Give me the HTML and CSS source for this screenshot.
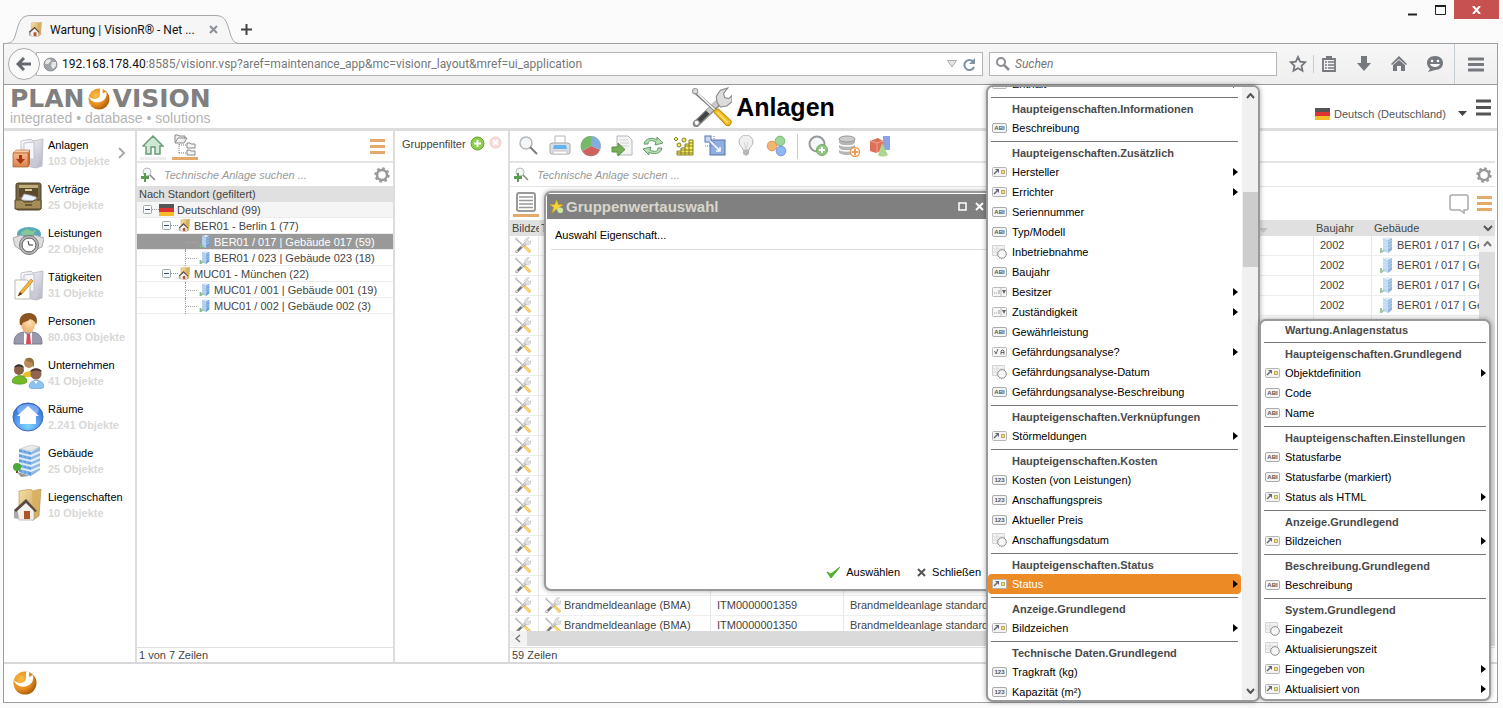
FILE: index.html
```html
<!DOCTYPE html>
<html lang="de">
<head>
<meta charset="utf-8">
<title>Wartung | VisionR® - Net ...</title>
<link rel="stylesheet" href="styles.css">
</head>
<body>
<svg class="defs" aria-hidden="true">
  <defs>
    <linearGradient id="gSteel" x1="0" y1="0" x2="1" y2="1"><stop offset="0" stop-color="#fff"/><stop offset="1" stop-color="#b4b4c4"/></linearGradient>
    <linearGradient id="gTan" x1="0" y1="0" x2="1" y2="1"><stop offset="0" stop-color="#f5dfa4"/><stop offset="1" stop-color="#c39a4d"/></linearGradient>
    <radialGradient id="gBlue" cx=".5" cy=".8" r=".8"><stop offset="0" stop-color="#7fd6ff"/><stop offset="1" stop-color="#2a62d8"/></radialGradient>
    <radialGradient id="gOrange" cx=".35" cy=".35" r=".75"><stop offset="0" stop-color="#fbc04a"/><stop offset=".6" stop-color="#e58a1c"/><stop offset="1" stop-color="#9a5208"/></radialGradient>
    <linearGradient id="gBox" x1="0" y1="0" x2="0" y2="1"><stop offset="0" stop-color="#f6b98c"/><stop offset="1" stop-color="#d9834c"/></linearGradient>
    <radialGradient id="gSkin" cx=".6" cy=".4" r=".7"><stop offset="0" stop-color="#ffe0b4"/><stop offset="1" stop-color="#e8a860"/></radialGradient>
  </defs>
  <symbol id="ball" viewBox="0 0 24 24"><circle cx="12" cy="12" r="11.5" fill="url(#gOrange)"/><path d="M1 9c2 3 7 4 10 2 2-1 2-3 2-6V1l3 0v5l4-2c1 5-1 9-6 11-6 2-12-1-13-6z" fill="#fff"/></symbol>
  <symbol id="tools" viewBox="0 0 38 38"><path d="M4 35l22-21" stroke="#888" stroke-width="6.500" stroke-linecap="round"/><path d="M5 34l10-10" stroke="#444" stroke-width="4" stroke-linecap="round"/><path d="M15 24l12-12" stroke="#c9c9c9" stroke-width="5"/><path d="M24 15l-1-6 4-6 7-2-4 5 1 4 4 1 3-3 0 6-5 4-6 1z" fill="#dcdcdc" stroke="#888"/><circle cx="4.500" cy="34" r="2.500" fill="#fff" stroke="#888"/><path d="M2 4l20 18" stroke="#777" stroke-width="3"/><path d="M2 3l20 19" stroke="#f4f4f4" stroke-width="1.500"/><circle cx="3" cy="4" r="2.500" fill="#ddd" stroke="#999"/><path d="M21 22l4-1 12 11c1 3-2 6-5 4l-11-12z" fill="#f5bd1f" stroke="#c48a10"/><path d="M24 24l10 10" stroke="#ffe477" stroke-width="1.500"/></symbol>
  <symbol id="folder" viewBox="0 0 32 32"><path d="M9 4l10-2 2 2 10-2-1 27-6 2-15-3z" fill="url(#gSteel)" stroke="#b8b8c4" stroke-width=".8"/><path d="M12 6l10-1v18l-10 4z" fill="#f7f7fb" stroke="#b0b0bc" stroke-width=".7"/><path d="M9 9l3 12 15 1-3 8-15-2z" fill="#c9c9d8"/></symbol>
  <symbol id="anlagen" viewBox="0 0 32 32"><use href="#folder"/><path d="M1 16l3-3h14l-2 3z" fill="#f9cda6" stroke="#b2683a" stroke-width=".6"/><path d="M1 16h15v14H1z" fill="url(#gBox)" stroke="#b2683a" stroke-width=".8"/><path d="M16 16l2-3v14l-2 3z" fill="#c06a38"/><path d="M7 18h3v4h3l-4.500 5L4 22h3z" fill="#a8321c"/></symbol>
  <symbol id="vertraege" viewBox="0 0 32 32"><rect x="4" y="2" width="25" height="27" rx="2" fill="#796744" stroke="#4f4126"/><rect x="7" y="5" width="19" height="11" fill="#5a4a2c"/><path d="M7 4h19v3H7z" fill="#c3ac7a"/><rect x="13" y="8" width="7" height="2" fill="#d8c89a"/><path d="M9 19l3-6 5 1 7 2v4z" fill="#eef4fb" stroke="#aab"/><path d="M3 19h7l2 2h8l2-2h7v9H3z" fill="#a48d5a" stroke="#5b4b2a"/><path d="M13 23h7v2h-7z" fill="#6a582f"/></symbol>
  <symbol id="leistungen" viewBox="0 0 32 32"><ellipse cx="17" cy="9" rx="12" ry="7" fill="#5aa9b8"/><path d="M9 7l6-3 5 2 4-1-3 5H10z" fill="#86c89a"/><path d="M1 13l8-3 4 2 3-2 3 2 4-2 9 3-2 9-7 3H9l-6-4z" fill="#dedede" stroke="#aaa"/><circle cx="17" cy="20" r="9.500" fill="#bbb" stroke="#777"/><circle cx="17" cy="20" r="7" fill="#fff" stroke="#555"/><path d="M17 20l-1-4M17 20h4" stroke="#333"/></symbol>
  <symbol id="taetig" viewBox="0 0 32 32"><use href="#folder"/><path d="M3 11h12l3 3v16H3z" fill="#fffefa" stroke="#bbb"/><path d="M6 27l2-4L19 10l2 2L10 25z" fill="#f4b63a" stroke="#b87a1a" stroke-width=".7"/><path d="M6 27l2-4 2 2z" fill="#333"/></symbol>
  <symbol id="person" viewBox="0 0 32 32"><path d="M2 31c0-8 3-11 10-12h8c7 1 10 4 10 12z" fill="#9999ad" stroke="#77778a"/><path d="M12 19l4 4 4-4v12h-8z" fill="#fff"/><path d="M15 21h3l1 10h-5z" fill="#d64a55"/><ellipse cx="16" cy="11" rx="7" ry="9" fill="url(#gSkin)"/><path d="M8 12C6 4 11 0 17 0c6 0 10 5 7 12-1-4-3-5-6-6-2 3-8 2-8 6z" fill="#8b5420"/></symbol>
  <symbol id="people" viewBox="0 0 32 32"><path d="M10 20c1-7 14-8 15 0z" fill="#e9c12c"/><circle cx="17" cy="6" r="5" fill="#b98d55"/><path d="M13 3c3-4 9-2 9 3l0 5-2-5z" fill="#94703c"/><path d="M0 25c0-8 15-9 15 0-3 3-12 3-15 0z" fill="#74b82a" stroke="#4d8a17" stroke-width=".6"/><circle cx="7" cy="13" r="5" fill="#8a5f44"/><path d="M2 11c1-5 9-5 10 0-3-2-7-2-10 0z" fill="#333"/><path d="M17 30c0-9 15-9 15 0-3 3-12 3-15 0z" fill="#8dc3f2" stroke="#5d94c8" stroke-width=".6"/><circle cx="24" cy="17" r="5.500" fill="#8d6450"/><path d="M18 15c1-5 11-5 12 0-3-2-8-2-12 0z" fill="#4a3328"/><path d="M22 24l2 3 2-3z" fill="#fff"/></symbol>
  <symbol id="raum" viewBox="0 0 32 32"><ellipse cx="16" cy="16" rx="15" ry="14" fill="url(#gBlue)" stroke="#3a66bb"/><ellipse cx="16" cy="9" rx="11" ry="6" fill="#b8dcff" opacity=".5"/><path d="M16 5l11 10h-3v8H8v-8H5z" fill="#fff"/></symbol>
  <symbol id="bldg" viewBox="0 0 32 32"><path d="M8 4l11-4 9 2-10 4z" fill="#e8eaf0" stroke="#aaa" stroke-width=".5"/><path d="M7 4l12 3v24L7 27z" fill="#5f9fe0"/><path d="M19 7l9-5v23l-9 6z" fill="#8fb8e4"/><path d="M7 8l12 3 9-4M7 13l12 3 9-4M7 18l12 3 9-4M7 23l12 3 9-4" fill="none" stroke="#e6eef8" stroke-width="2"/><path d="M11 5v23M15 6v24" stroke="#bcd4f0" stroke-width=".7"/><path d="M5 27l7 2 5 2-8 1z" fill="#999"/><path d="M5 23v5" stroke="#6b5030" stroke-width="2"/><circle cx="5" cy="22" r="4" fill="#4da83c"/></symbol>
  <symbol id="bldgs" viewBox="0 0 16 16"><path d="M5 1l5-1 4 1-4 2z" fill="#dfe7f0"/><path d="M5 1l5 2v13l-5-2z" fill="#a9cdee"/><path d="M10 3l4-2v12l-4 3z" fill="#6e9fd4"/><path d="M10 5l4-2M10 8l4-2M10 11l4-2M5 4l5 2M5 7l5 2M5 10l5 2" stroke="#d5e5f5" stroke-width=".6"/><path d="M2 11h2v2h3l-3 3H2z" fill="#86b58a"/></symbol>
  <symbol id="liegen" viewBox="0 0 32 32"><path d="M7 2l12-2 1 2 9-2-2 27-6 4-14-3z" fill="url(#gTan)" stroke="#b08d4a" stroke-width=".6"/><path d="M20 2l8-1-2 26-5 3z" fill="#d6b162"/><path d="M2 21l4-2v11l-4-1z" fill="#aaa"/><path d="M5 21l9-8 8 8v10H7z" fill="#f5f2ee" stroke="#999" stroke-width=".6"/><path d="M2 21L14 10l11 12-2 1-9-9-10 9z" fill="#5b4a44"/><rect x="12" y="22" width="6" height="8" fill="#b3532a"/></symbol>
  <symbol id="home" viewBox="0 0 22 20"><path d="M3 11L1 11 11 1l10 10h-3v8h-5v-7H9v7H4v-8" fill="#cfe8d4" stroke="#6c9c78" stroke-width="1.500"/></symbol>
  <symbol id="treeico" viewBox="0 0 22 22"><path d="M1 8V1h3l1 1h6v2H4L1 9h9l3-5h-3" fill="#eee" stroke="#888"/><path d="M5 10v10M5 11h7M5 19h7" stroke="#777" stroke-dasharray="1 1" fill="none"/><path d="M13 9h3l1 1h4v4h-8zM13 16h3l1 1h4v4h-8z" fill="#f4f4f4" stroke="#888"/></symbol>
  <symbol id="findplus" viewBox="0 0 16 16"><circle cx="7" cy="5" r="4" fill="#f4f6f8" stroke="#bbb"/><path d="M10 8l5 5" stroke="#888" stroke-width="1.500"/><path d="M4 6h2v3h3v3H6v3H4v-3H1V9h3z" fill="#5a9c52"/></symbol>
  <symbol id="gear" viewBox="0 0 16 16"><circle cx="8" cy="8" r="5" fill="none" stroke="#999" stroke-width="2.500"/><circle cx="8" cy="8" r="6.700" fill="none" stroke="#999" stroke-width="2" stroke-dasharray="2.630 2.630"/></symbol>
  <symbol id="flag" viewBox="0 0 15 12"><path d="M0 0h15v4H0z" fill="#555"/><path d="M0 4h15v4H0z" fill="#d33"/><path d="M0 8h15v4H0z" fill="#f4bd28"/></symbol>
  <symbol id="minus" viewBox="0 0 9 9"><rect x=".5" y=".5" width="8" height="8" rx="1" fill="#fafafa" stroke="#9aa"/><path d="M2 4.500h5" stroke="#3a4a7a"/></symbol>
  <symbol id="mag" viewBox="0 0 22 22"><circle cx="8" cy="8" r="6" fill="#f2f5f8" stroke="#aaa" stroke-width="1.500"/><path d="M12 12l7 7" stroke="#666" stroke-width="2"/></symbol>
  <symbol id="printer" viewBox="0 0 22 22"><path d="M6 1h10v8H6z" fill="#fff" stroke="#aaa"/><rect x="1" y="8" width="20" height="11" rx="2" fill="#d5dae0" stroke="#999"/><path d="M5 10h12l1 4H4z" fill="#4aa5ec"/><path d="M4 16h14v3H4z" fill="#fff" stroke="#bbb"/></symbol>
  <symbol id="pie" viewBox="0 0 22 22"><path d="M11 11V1a10 10 0 0 1 9 14z" fill="#6aa2d8"/><path d="M11 11l9 4A10 10 0 0 1 2 16z" fill="#c94444"/><path d="M11 11l-9 5A10 10 0 0 1 11 1z" fill="#5cae50"/><circle cx="11" cy="11" r="9.500" fill="none" stroke="#888" stroke-opacity=".4"/></symbol>
  <symbol id="export" viewBox="0 0 22 22"><path d="M6 1h11l4 4v15H6z" fill="#f3f3f3" stroke="#aaa"/><path d="M9 5h8M9 8h9M9 11h9" stroke="#ccc"/><path d="M1 12h6V8l7 6.500L7 21v-4H1z" fill="#5fa43a" stroke="#3f7a24"/></symbol>
  <symbol id="refresh" viewBox="0 0 22 22"><path d="M2 9c1-6 9-7 13-4l0-3 6 6-8 2 1-3C10 5 6 5 6 9z" fill="#a7d9a4" stroke="#4a8a50"/><path d="M20 13c-1 6-9 7-13 4l0 3-6-6 8-2-1 3c4 2 8 2 8-2z" fill="#a7d9a4" stroke="#4a8a50"/></symbol>
  <symbol id="stairs" viewBox="0 0 22 22"><path d="M4 20v-4h4v-3h4v-4h4V5h4v15zM8 16v4M12 13v7M16 9v11M4 18h16M8 15h12M12 11h8M16 8h4" fill="#f9ec2c" stroke="#6f6810"/><circle cx="6" cy="10" r="2" fill="#f9ec2c" stroke="#6f6810"/><circle cx="11" cy="5" r="2" fill="#f9ec2c" stroke="#6f6810"/><path d="M3 2l2 2-2 2-2-2z" fill="#f9ec2c" stroke="#6f6810"/></symbol>
  <symbol id="resize" viewBox="0 0 22 22"><rect x="6" y="5" width="15" height="15" fill="#7f9fda" stroke="#3a5da0"/><rect x="1" y="1" width="6" height="6" fill="#bcd0f2" stroke="#3a5da0"/><path d="M10 1v10H1" fill="none" stroke="#4a6db0" stroke-dasharray="1 1"/><path d="M6 6l10 10M16 12v4h-4" fill="none" stroke="#fff" stroke-width="1.500"/></symbol>
  <symbol id="bulb" viewBox="0 0 22 22"><path d="M8 15c0-3-4-4-4-8a7 7 0 0 1 14 0c0 4-4 5-4 8z" fill="#eee" stroke="#aaa"/><path d="M8 15h6v4l-3 2-3-2z" fill="#aaa"/><path d="M9 7l2 7 2-7" stroke="#ccc" fill="none"/></symbol>
  <symbol id="dots" viewBox="0 0 22 22"><circle cx="14" cy="6" r="4.800" fill="#8fd08a" stroke="#5faf5c"/><circle cx="6" cy="11" r="4.800" fill="#f4a85a" stroke="#d98a3c"/><circle cx="15" cy="16" r="4.800" fill="#7aacf4" stroke="#5485d4"/></symbol>
  <symbol id="magplus" viewBox="0 0 22 22"><circle cx="10" cy="9" r="7.500" fill="#f3f6f8" stroke="#888" stroke-width="2"/><circle cx="15" cy="15" r="5.500" fill="#7fc06a" stroke="#5c9c4a"/><path d="M15 12v6M12 15h6" stroke="#fff" stroke-width="2"/></symbol>
  <symbol id="dbplus" viewBox="0 0 22 22"><path d="M1 4v13c0 4 16 4 16 0V4z" fill="#aaa"/><ellipse cx="9" cy="4" rx="8" ry="3" fill="#c4c4c4" stroke="#888"/><path d="M1 8c0 4 16 4 16 0M1 13c0 4 16 4 16 0" fill="none" stroke="#fff" stroke-width="1.500"/><circle cx="17" cy="17" r="4.500" fill="#fff" stroke="#e78a34" stroke-width="1.500"/><path d="M17 14v6M14 17h6" stroke="#e78a34" stroke-width="2"/></symbol>
  <symbol id="shapes" viewBox="0 0 22 22"><path d="M14 1h7v14h-7z" fill="#7a94e0"/><path d="M1 6l8-3 5 3v9l-7 3-6-2z" fill="#d9583a"/><path d="M1 6l7 2 6-2M8 8v9" stroke="#f0907a" fill="none"/><path d="M13 8l6 12c-3 2-8 2-10 0z" fill="#9fd080"/></symbol>
  <symbol id="star" viewBox="0 0 16 16"><path d="M8 1l2 5h5l-4 3 2 6-5-4-5 4 2-6-4-3h5z" fill="#f3d63c" stroke="#c9a21a" stroke-width=".7"/><circle cx="12" cy="12" r="3" fill="#cfe79e"/></symbol>
  <symbol id="cal" viewBox="0 0 15 14"><path d="M.5.500h12v10H.5z" fill="#f2f2f2" stroke="#d4d4d4"/><path d="M1 4h11M1 7h11M5 1v9" stroke="#dcdcdc"/><circle cx="10" cy="9" r="4.300" fill="#f8f8f8" stroke="#8a8a8a"/></symbol>
  <symbol id="ref" viewBox="0 0 15 10"><rect x=".5" y=".5" width="14" height="9" rx="1" fill="#f2f2f2" stroke="#b4b4b4"/><path d="M2 7l3-3" stroke="#667" stroke-width="1.500"/><path d="M3 2h4v4z" fill="#667"/><path d="M9.500 3.500h3v3h-3z" fill="#efe08a" stroke="#b8a850"/></symbol>
  <symbol id="sel" viewBox="0 0 15 10"><rect x=".5" y=".5" width="14" height="9" rx="1" fill="#f6f6f6" stroke="#bbb"/><path d="M2 6h1M4 6h1M7 3v4" stroke="#999"/><path d="M9 1v8" stroke="#bbb"/><path d="M10 3h4l-2 4z" fill="#666"/></symbol>
  <symbol id="bool" viewBox="0 0 15 10"><rect x=".5" y=".5" width="14" height="9" rx="1" fill="#f6f6f6" stroke="#bbb"/><path d="M2.500 4l1.500 3 2-5M9 7.500V4l1-1h1l1 1v3.500M9 5.500h3" fill="none" stroke="#666"/></symbol>
</svg>

<header class="titlebar">
  <div class="tab">
    <svg class="tab-shape" viewBox="0 0 236 29" preserveAspectRatio="none"><path d="M0 28.500c10 0 10-4 13-14 3-11 6-14 14-14h184c9 0 11 4 14 14 3 11 5 14 11 14" fill="#f6f6f7" stroke="#a5a7ac"/></svg>
    <svg class="s15"><use href="#liegen"/></svg>
    <span class="tab-title">Wartung | VisionR® - Net ...</span>
    <button class="bare" aria-label="Tab schließen"><svg width="9" height="9"><path d="M1 1l7 7M8 1L1 8" stroke="#8a8f96" stroke-width="2"/></svg></button>
  </div>
  <button class="bare newtab" aria-label="Neuer Tab"><svg width="11" height="11"><path d="M5.500 0v11M0 5.500h11" stroke="#444" stroke-width="2"/></svg></button>
  <div class="wincontrols">
    <button class="bare" aria-label="Minimieren"><svg width="9" height="12"><path d="M0 10.500h9" stroke="#222" stroke-width="2"/></svg></button>
    <button class="bare" aria-label="Maximieren"><svg width="11" height="10"><path d="M.5 1v8.500h10V1M0 1h11" fill="none" stroke="#222" stroke-width="1"/><path d="M0 1h11" stroke="#222" stroke-width="2"/></svg></button>
    <button class="bare winclose" aria-label="Schließen"><svg width="9" height="8"><path d="M1 0l7 8M8 0L1 8" stroke="#fff" stroke-width="2"/></svg></button>
  </div>
</header>

<div class="frame">
  <nav class="navbar">
    <button class="back" aria-label="Zurück"><svg width="16" height="14"><path d="M15 7H3M8 1L2 7l6 6" fill="none" stroke="#666a70" stroke-width="3"/></svg></button>
    <div class="urlbox">
      <svg width="15" height="15" viewBox="0 0 15 15"><circle cx="7.500" cy="7.500" r="6.500" fill="#a0a3a8" stroke="#8a8d92"/><path d="M3 3l4-1 1 2-3 3-3 0zM9 5l4 0 0 4-3 3-2-3z" fill="#e4e6e8"/></svg>
      <div class="url" role="textbox" aria-label="Adresse"><b>192.168.178.40</b>:8585/visionr.vsp?aref=maintenance_app&amp;mc=visionr_layout&amp;mref=ui_application</div>
      <svg width="10" height="8"><path d="M.5.500h9L5 7z" fill="#e4e6ea" stroke="#aaa"/></svg>
      <button class="bare" aria-label="Neu laden"><svg width="13" height="13" viewBox="0 0 13 13"><path d="M10 3.500A5 5 0 1 0 11 9" fill="none" stroke="#7e93a3" stroke-width="2"/><path d="M12 0v6H6z" fill="#7e93a3"/></svg></button>
    </div>
    <label class="searchbox"><svg width="14" height="14" viewBox="0 0 14 14"><circle cx="5" cy="5" r="4" fill="none" stroke="#8a8d92" stroke-width="2"/><path d="M8 8l5 5" stroke="#8a8d92" stroke-width="2.500"/></svg><input type="text" placeholder="Suchen" aria-label="Suchen"></label>
    <div class="navicons">
      <button class="bare" aria-label="Lesezeichen"><svg width="18" height="18" viewBox="0 0 18 18"><path d="M9 2l2.200 4.700 5 .6-3.700 3.500 1 5L9 13.300 4.500 15.800l1-5L1.800 7.300l5-.6z" fill="none" stroke="#75787d" stroke-width="1.800"/></svg></button>
      <button class="bare cliplist" aria-label="Leseliste"><svg width="16" height="18" viewBox="0 0 16 18"><path d="M2 4h12v12H2z" fill="none" stroke="#75787d" stroke-width="1.800"/><path d="M5 1h6v3H5z" fill="#75787d"/><path d="M4 7h2M7 7h6M4 10h2M7 10h6M4 13h2M7 13h6" stroke="#75787d" stroke-width="1.500"/></svg></button>
      <button class="bare" aria-label="Downloads"><svg width="16" height="16" viewBox="0 0 16 16"><path d="M5 0h6v7h4l-7 8-7-8h4z" fill="#75787d"/></svg></button>
      <button class="bare" aria-label="Startseite"><svg width="16" height="16" viewBox="0 0 16 16"><path d="M0 8l8-8 8 8-1 1-7-6-7 6z" fill="#75787d"/><path d="M2 9l6-5 6 5v6h-4v-5H6v5H2z" fill="#75787d"/></svg></button>
      <button class="bare" aria-label="Chat"><svg width="18" height="16" viewBox="0 0 18 16"><path d="M9 0c5 0 8 3 8 7s-3 7-8 7l-7 2 2-3C2 11 1 9 1 7c0-4 3-7 8-7z" fill="#75787d"/><circle cx="6" cy="5" r="1.300" fill="#fff"/><circle cx="12" cy="5" r="1.300" fill="#fff"/><path d="M4 8h10c-1 4-9 4-10 0z" fill="#fff"/></svg></button>
      <button class="bare burger-nav" aria-label="Menü"><svg width="16" height="15"><path d="M1 2h14M1 7.500h14M1 13h14" stroke="#75787d" stroke-width="3" stroke-linecap="round"/></svg></button>
    </div>
  </nav>

  <div class="apphead">
    <div class="logo"><div class="logo-name">PLAN<svg width="22" height="22"><use href="#ball"/></svg>VISION</div><div class="logo-sub">integrated • database • solutions</div></div>
    <h1><svg width="40" height="40"><use href="#tools"/></svg>Anlagen</h1>
    <div class="lang"><svg width="15" height="12"><use href="#flag"/></svg><select aria-label="Sprache"><option>Deutsch (Deutschland)</option></select><svg class="caret" width="10" height="6"><path d="M0 0h9l-4.500 5z" fill="#444"/></svg><button class="bare" aria-label="Menü"><svg width="15" height="17"><path d="M0 2h15M0 8.500h15M0 15h15" stroke="#555" stroke-width="3"/></svg></button></div>
  </div>

  <main class="main">
    <nav class="side">
      <a href="#"><svg class="s32"><use href="#anlagen"/></svg><span>Anlagen<b>103 Objekte</b></span><svg class="chev" width="8" height="12"><path d="M1 1l5 5-5 5" fill="none" stroke="#aaa" stroke-width="2"/></svg></a>
      <a href="#"><svg class="s32"><use href="#vertraege"/></svg><span>Verträge<b>25 Objekte</b></span></a>
      <a href="#"><svg class="s32"><use href="#leistungen"/></svg><span>Leistungen<b>22 Objekte</b></span></a>
      <a href="#"><svg class="s32"><use href="#taetig"/></svg><span>Tätigkeiten<b>31 Objekte</b></span></a>
      <a href="#"><svg class="s32"><use href="#person"/></svg><span>Personen<b>80.063 Objekte</b></span></a>
      <a href="#"><svg class="s32"><use href="#people"/></svg><span>Unternehmen<b>41 Objekte</b></span></a>
      <a href="#"><svg class="s32"><use href="#raum"/></svg><span>Räume<b>2.241 Objekte</b></span></a>
      <a href="#"><svg class="s32"><use href="#bldg"/></svg><span>Gebäude<b>25 Objekte</b></span></a>
      <a href="#"><svg class="s32"><use href="#liegen"/></svg><span>Liegenschaften<b>10 Objekte</b></span></a>
    </nav>

    <section class="treepane">
      <div class="toolbar tree-tools">
        <button class="bare view dim" aria-label="Start"><svg width="22" height="20"><use href="#home"/></svg></button>
        <button class="bare view on" aria-label="Baum"><svg width="22" height="22"><use href="#treeico"/></svg></button>
        <button class="bare push" aria-label="Menü"><svg width="15" height="15"><path d="M0 1.500h15M0 7.500h15M0 13.500h15" stroke="#e6a96c" stroke-width="3"/></svg></button>
      </div>
      <label class="find"><svg width="16" height="16"><use href="#findplus"/></svg><input type="text" placeholder="Technische Anlage suchen ..." aria-label="Technische Anlage suchen"><svg width="16" height="16"><use href="#gear"/></svg></label>
      <div class="treehead">Nach Standort (gefiltert)</div>
      <ul class="tree">
        <li class="l0 shade"><svg class="s9"><use href="#minus"/></svg><i></i><svg width="15" height="12"><use href="#flag"/></svg>Deutschland (99)</li>
        <li class="l1"><svg class="s9"><use href="#minus"/></svg><i></i><svg class="s13"><use href="#liegen"/></svg>BER01 - Berlin 1 (77)</li>
        <li class="l2 sel"><i></i><svg class="s13"><use href="#bldgs"/></svg>BER01 / 017 | Gebäude 017 (59)</li>
        <li class="l2"><i></i><svg class="s13"><use href="#bldgs"/></svg>BER01 / 023 | Gebäude 023 (18)</li>
        <li class="l1"><svg class="s9"><use href="#minus"/></svg><i></i><svg class="s13"><use href="#liegen"/></svg>MUC01 - München (22)</li>
        <li class="l2"><i></i><svg class="s13"><use href="#bldgs"/></svg>MUC01 / 001 | Gebäude 001 (19)</li>
        <li class="l2"><i></i><svg class="s13"><use href="#bldgs"/></svg>MUC01 / 002 | Gebäude 002 (3)</li>
      </ul>
      <div class="status">1 von 7 Zeilen</div>
    </section>

    <section class="filterpane">
      <span>Gruppenfilter</span>
      <button class="bare" aria-label="Hinzufügen"><svg width="15" height="15"><circle cx="7.500" cy="7.500" r="6.500" fill="#8fce4c" stroke="#62a52a"/><path d="M7.500 4v7M4 7.500h7" stroke="#fff" stroke-width="2"/></svg></button>
      <button class="bare" aria-label="Entfernen"><svg width="13" height="13"><circle cx="6.500" cy="6.500" r="5.500" fill="#f8dada" stroke="#f0caca"/><path d="M4 4l5 5M9 4L4 9" stroke="#fff" stroke-width="2"/></svg></button>
    </section>

    <section class="content">
      <div class="toolbar icons">
        <button class="bare" aria-label="Suchen"><svg class="s22"><use href="#mag"/></svg></button>
        <button class="bare" aria-label="Drucken"><svg class="s22"><use href="#printer"/></svg></button>
        <button class="bare" aria-label="Diagramm"><svg class="s22"><use href="#pie"/></svg></button>
        <button class="bare" aria-label="Export"><svg class="s22"><use href="#export"/></svg></button>
        <button class="bare" aria-label="Aktualisieren"><svg class="s22"><use href="#refresh"/></svg></button>
        <button class="bare" aria-label="Stufen"><svg class="s22"><use href="#stairs"/></svg></button>
        <button class="bare" aria-label="Größe"><svg class="s22"><use href="#resize"/></svg></button>
        <button class="bare" aria-label="Hinweis"><svg class="s22"><use href="#bulb"/></svg></button>
        <button class="bare" aria-label="Gruppen"><svg class="s22"><use href="#dots"/></svg></button>
        <span class="divider"></span>
        <button class="bare" aria-label="Suche hinzufügen"><svg class="s22"><use href="#magplus"/></svg></button>
        <button class="bare" aria-label="Daten hinzufügen"><svg class="s22"><use href="#dbplus"/></svg></button>
        <button class="bare" aria-label="Formen"><svg class="s22"><use href="#shapes"/></svg></button>
      </div>
      <label class="find line"><svg width="16" height="16"><use href="#findplus"/></svg><input type="text" placeholder="Technische Anlage suchen ..." aria-label="Anlage suchen"><svg width="16" height="16"><use href="#gear"/></svg></label>
      <div class="views">
        <button class="bare view on" aria-label="Liste"><svg width="20" height="20"><rect x="1" y="1" width="18" height="18" rx="2" fill="#fff" stroke="#999" stroke-width="2"/><path d="M3 5h14M3 8.500h14M3 12h14M3 15.500h14" stroke="#999" stroke-width="1.500"/></svg></button>
        <button class="bare push" aria-label="Kommentar"><svg width="20" height="20"><path d="M3 1h14q2 0 2 2v11q0 2-2 2h-2v3l-4-3H3q-2 0-2-2V3q0-2 2-2z" fill="#fff" stroke="#aaa" stroke-width="1.500"/></svg></button>
        <button class="bare" aria-label="Menü"><svg width="15" height="16"><path d="M0 1.500h15M0 7.500h15M0 13.500h15" stroke="#e6a96c" stroke-width="3"/></svg></button>
      </div>
      <div class="grid">
        <table>
          <colgroup><col class="c1"><col class="c2"><col class="c3"><col class="c4"><col class="c5"><col class="c6"></colgroup>
          <thead><tr><th>Bildze</th><th>Typ</th><th></th><th><svg class="sort" width="9" height="5"><path d="M0 0h9L4.500 5z" fill="#c4c4c0"/></svg></th><th>Baujahr</th><th>Gebäude<svg class="more" width="10" height="7"><path d="M1 1l4 4 4-4" fill="none" stroke="#555" stroke-width="2"/></svg></th></tr></thead>
          <tbody>
            <tr><td><svg class="s16"><use href="#tools"/></svg></td><td></td><td></td><td></td><td>2002</td><td><svg class="s16"><use href="#bldgs"/></svg>BER01 / 017 | Ge</td></tr>
            <tr><td><svg class="s16"><use href="#tools"/></svg></td><td></td><td></td><td></td><td>2002</td><td><svg class="s16"><use href="#bldgs"/></svg>BER01 / 017 | Ge</td></tr>
            <tr><td><svg class="s16"><use href="#tools"/></svg></td><td></td><td></td><td></td><td>2002</td><td><svg class="s16"><use href="#bldgs"/></svg>BER01 / 017 | Ge</td></tr>
            <tr><td><svg class="s16"><use href="#tools"/></svg></td><td></td><td></td><td></td><td>2002</td><td><svg class="s16"><use href="#bldgs"/></svg>BER01 / 017 | Ge</td></tr>
            <tr><td><svg class="s16"><use href="#tools"/></svg></td><td></td><td></td><td></td><td></td><td></td></tr>
            <tr><td><svg class="s16"><use href="#tools"/></svg></td><td></td><td></td><td></td><td></td><td></td></tr>
            <tr><td><svg class="s16"><use href="#tools"/></svg></td><td></td><td></td><td></td><td></td><td></td></tr>
            <tr><td><svg class="s16"><use href="#tools"/></svg></td><td></td><td></td><td></td><td></td><td></td></tr>
            <tr><td><svg class="s16"><use href="#tools"/></svg></td><td></td><td></td><td></td><td></td><td></td></tr>
            <tr><td><svg class="s16"><use href="#tools"/></svg></td><td></td><td></td><td></td><td></td><td></td></tr>
            <tr><td><svg class="s16"><use href="#tools"/></svg></td><td></td><td></td><td></td><td></td><td></td></tr>
            <tr><td><svg class="s16"><use href="#tools"/></svg></td><td></td><td></td><td></td><td></td><td></td></tr>
            <tr><td><svg class="s16"><use href="#tools"/></svg></td><td></td><td></td><td></td><td></td><td></td></tr>
            <tr><td><svg class="s16"><use href="#tools"/></svg></td><td></td><td></td><td></td><td></td><td></td></tr>
            <tr><td><svg class="s16"><use href="#tools"/></svg></td><td></td><td></td><td></td><td></td><td></td></tr>
            <tr><td><svg class="s16"><use href="#tools"/></svg></td><td></td><td></td><td></td><td></td><td></td></tr>
            <tr><td><svg class="s16"><use href="#tools"/></svg></td><td></td><td></td><td></td><td></td><td></td></tr>
            <tr><td><svg class="s16"><use href="#tools"/></svg></td><td></td><td></td><td></td><td></td><td></td></tr>
            <tr><td><svg class="s16"><use href="#tools"/></svg></td><td><svg class="s16"><use href="#tools"/></svg>Brandmeldeanlage (BMA)</td><td>ITM0000001359</td><td>Brandmeldeanlage standard</td><td></td><td></td></tr>
            <tr><td><svg class="s16"><use href="#tools"/></svg></td><td><svg class="s16"><use href="#tools"/></svg>Brandmeldeanlage (BMA)</td><td>ITM0000001350</td><td>Brandmeldeanlage standard</td><td></td><td></td></tr>
          </tbody>
        </table>
        <div class="vscroll"><svg width="9" height="6"><path d="M1 5l3.500-4L8 5" fill="none" stroke="#777" stroke-width="2"/></svg></div>
      </div>
      <div class="hscroll"><svg width="6" height="9"><path d="M5 1L1 4.500 5 8" fill="none" stroke="#777" stroke-width="1.500"/></svg></div>
      <div class="status">59 Zeilen</div>
    </section>
  </main>
  <footer class="foot"><svg width="24" height="24"><use href="#ball"/></svg></footer>
</div>

<div class="dialog" role="dialog" aria-label="Gruppenwertauswahl">
  <div class="dlg-head"><svg class="s15"><use href="#star"/></svg><span>Gruppenwertauswahl</span><button class="bare push" aria-label="Vergrößern"><svg width="9" height="9"><rect x="1" y="1" width="7" height="7" fill="none" stroke="#fff" stroke-width="1.500"/></svg></button><button class="bare" aria-label="Schließen"><svg width="9" height="9"><path d="M1 1l7 7M8 1L1 8" stroke="#fff" stroke-width="2"/></svg></button></div>
  <div class="dlg-prop">Auswahl Eigenschaft...</div>
  <div class="dlg-foot"><button class="bare"><svg width="14" height="13"><path d="M1 6l4 6L14 1 5 8z" fill="#4fae2c" stroke="#4fae2c"/></svg>Auswählen</button><button class="bare"><svg width="9" height="9"><path d="M1 1l7 7M8 1L1 8" stroke="#555" stroke-width="2"/></svg>Schließen</button></div>
</div>

<div class="menu menu-main">
  <ul class="menu-list">
    <li class="it sub"><svg><use href="#ref"/></svg>Enthält</li>
    <li class="sec">Haupteigenschaften.Informationen</li>
    <li class="it"><i>ABI</i>Beschreibung</li>
    <li class="sec">Haupteigenschaften.Zusätzlich</li>
    <li class="it sub"><svg><use href="#ref"/></svg>Hersteller</li>
    <li class="it sub"><svg><use href="#ref"/></svg>Errichter</li>
    <li class="it"><i>ABI</i>Seriennummer</li>
    <li class="it"><i>ABI</i>Typ/Modell</li>
    <li class="it"><svg class="cal"><use href="#cal"/></svg>Inbetriebnahme</li>
    <li class="it"><i>ABI</i>Baujahr</li>
    <li class="it sub"><svg><use href="#sel"/></svg>Besitzer</li>
    <li class="it sub"><svg><use href="#sel"/></svg>Zuständigkeit</li>
    <li class="it"><i>ABI</i>Gewährleistung</li>
    <li class="it sub"><svg><use href="#bool"/></svg>Gefährdungsanalyse?</li>
    <li class="it"><svg class="cal"><use href="#cal"/></svg>Gefährdungsanalyse-Datum</li>
    <li class="it"><i>ABI</i>Gefährdungsanalyse-Beschreibung</li>
    <li class="sec">Haupteigenschaften.Verknüpfungen</li>
    <li class="it sub"><svg><use href="#ref"/></svg>Störmeldungen</li>
    <li class="sec">Haupteigenschaften.Kosten</li>
    <li class="it"><i>123</i>Kosten (von Leistungen)</li>
    <li class="it"><i>123</i>Anschaffungspreis</li>
    <li class="it"><i>123</i>Aktueller Preis</li>
    <li class="it"><svg class="cal"><use href="#cal"/></svg>Anschaffungsdatum</li>
    <li class="sec">Haupteigenschaften.Status</li>
    <li class="it sub active"><svg><use href="#ref"/></svg>Status</li>
    <li class="sec">Anzeige.Grundlegend</li>
    <li class="it sub"><svg><use href="#ref"/></svg>Bildzeichen</li>
    <li class="sec">Technische Daten.Grundlegend</li>
    <li class="it"><i>123</i>Tragkraft (kg)</li>
    <li class="it"><i>123</i>Kapazität (m²)</li>
  </ul>
  <div class="mscroll"><svg width="9" height="6"><path d="M1 5l3.500-4L8 5" fill="none" stroke="#555" stroke-width="2"/></svg><span></span><svg width="9" height="6"><path d="M1 1l3.500 4L8 1" fill="none" stroke="#555" stroke-width="2"/></svg></div>
</div>

<div class="menu menu-sub">
  <ul class="menu-list">
    <li class="sec first">Wartung.Anlagenstatus</li>
    <li class="sec">Haupteigenschaften.Grundlegend</li>
    <li class="it sub"><svg><use href="#ref"/></svg>Objektdefinition</li>
    <li class="it"><i>ABI</i>Code</li>
    <li class="it"><i>ABI</i>Name</li>
    <li class="sec">Haupteigenschaften.Einstellungen</li>
    <li class="it"><i>ABI</i>Statusfarbe</li>
    <li class="it"><i>ABI</i>Statusfarbe (markiert)</li>
    <li class="it sub"><svg><use href="#ref"/></svg>Status als HTML</li>
    <li class="sec">Anzeige.Grundlegend</li>
    <li class="it sub"><svg><use href="#ref"/></svg>Bildzeichen</li>
    <li class="sec">Beschreibung.Grundlegend</li>
    <li class="it"><i>ABI</i>Beschreibung</li>
    <li class="sec">System.Grundlegend</li>
    <li class="it"><svg class="cal"><use href="#cal"/></svg>Eingabezeit</li>
    <li class="it"><svg class="cal"><use href="#cal"/></svg>Aktualisierungszeit</li>
    <li class="it sub"><svg><use href="#ref"/></svg>Eingegeben von</li>
    <li class="it sub"><svg><use href="#ref"/></svg>Aktualisiert von</li>
  </ul>
</div>
</body>
</html>
```
FILE: styles.css
```css
* { box-sizing: border-box; }
body { margin: 0; height: 100vh; display: flex; flex-direction: column; overflow: hidden; background: #fbfbfb; font: 11px/16px "Liberation Sans", Arial, sans-serif; color: #444; position: relative; }
svg { display: block; flex: none; }
.defs { position: absolute; width: 0; height: 0; }
.bare { border: 0; padding: 0; background: none; font: inherit; color: inherit; display: flex; align-items: center; }
ul { list-style: none; margin: 0; padding: 0; }
.s9 { width: 9px; height: 9px; }
.s13 { width: 13px; height: 15px; }
.s15 { width: 15px; height: 15px; }
.s16 { width: 16px; height: 16px; }
.s22 { width: 22px; height: 22px; }
.s32 { width: 32px; height: 32px; }
.push { margin-left: auto; }

.titlebar { flex: none; height: 43px; display: flex; align-items: flex-end; padding-left: 4px; font: 12px/16px Roboto, "Open Sans", sans-serif; color: #111; }
.tab { position: relative; z-index: 1; display: flex; align-items: center; gap: 7px; width: 236px; height: 29px; margin-bottom: -1px; padding: 0 22px 0 24px; }
.tab-shape { position: absolute; left: 0; top: 0; width: 100%; height: 100%; }
.tab > :not(.tab-shape) { position: relative; }
.tab-title { flex: 1; white-space: nowrap; }
.newtab { margin: 0 0 8px 1px; }
.wincontrols { margin-left: auto; align-self: flex-start; display: flex; align-items: center; gap: 18px; padding-right: 4px; }
.winclose { width: 45px; height: 19px; justify-content: center; background: #c75050; margin-left: -10px; }

.frame { flex: 1; min-height: 0; margin: 0 5px 5px 3px; border: 1px solid #9b9ea3; background: #fff; display: flex; flex-direction: column; }
.navbar { flex: none; height: 41px; display: flex; align-items: center; padding-left: 4px; background: linear-gradient(#f6f6f7, #efeff0); border-bottom: 1px solid #999; font: 12px/16px Roboto, "Open Sans", sans-serif; }
.back { z-index: 1; width: 32px; height: 32px; border: 1px solid #aaa; border-radius: 50%; background: #fafafa; padding: 0; display: flex; align-items: center; justify-content: center; }
.urlbox { flex: 1; height: 24px; margin-left: -4px; padding: 0 6px; border: 1px solid #b4b6ba; background: #fff; display: flex; align-items: center; gap: 4px; min-width: 0; }
.url { flex: 1; color: #777; white-space: nowrap; overflow: hidden; }
.url b { color: #111; font-weight: normal; }
.urlbox .bare { margin-left: 2px; }
.searchbox { width: 288px; height: 24px; margin-left: 6px; padding: 0 6px; border: 1px solid #b4b6ba; background: #fff; display: flex; align-items: center; gap: 5px; }
input { flex: 1; min-width: 0; border: 0; padding: 0; background: none; outline: 0; font: inherit; }
input::placeholder { color: #777; font-style: italic; opacity: 1; }
.navicons { display: flex; align-items: center; gap: 19px; padding: 0 13px 0 12px; height: 100%; }
.cliplist { border-left: 1px solid #ccc; margin-left: -13px; padding-left: 7px; }
.burger-nav { height: 100%; border-left: 1px solid #c4cdd2; padding-left: 13px; margin-left: -9px; }

.apphead { flex: none; height: 46px; border-bottom: 3px solid #ddd; display: grid; grid-template-columns: 1fr auto 1fr; align-items: start; padding: 2px 6px 0 6px; }
.logo-name { display: flex; align-items: center; gap: 3px; height: 24px; color: #808080; font: bold 25px/24px "DejaVu Sans", sans-serif; }
.logo-sub { font-size: 14px; line-height: 15px; color: #b4b4b4; }
h1 { margin: 0; padding-left: 26px; display: flex; align-items: center; gap: 4px; font-size: 25px; line-height: 40px; color: #000; }
.lang { justify-self: end; display: flex; align-items: center; gap: 4px; padding-top: 19px; color: #555; }
.lang select { appearance: none; border: 0; background: none; font: inherit; color: inherit; padding: 0; width: 120px; }
.lang .bare { margin: -14px 0 0 4px; }

.main { flex: 1; min-height: 0; display: flex; border-bottom: 2px solid #d8d8d8; }
.side { width: 133px; border-right: 2px solid #ddd; }
.side a { display: flex; height: 44px; padding: 6px 0 6px 8px; gap: 4px; color: #000; text-decoration: none; position: relative; }
.side b { display: block; color: #d8d8d8; }
.side span { white-space: nowrap; }
.chev { position: absolute; right: 9px; top: 16px; }
.treepane { width: 258px; border-right: 2px solid #ddd; display: flex; flex-direction: column; }
.toolbar { flex: none; height: 32px; display: flex; align-items: center; border-bottom: 2px solid #e4e4e4; }
.tree-tools { gap: 6px; padding: 0 8px 0 3px; }
.view { width: 26px; height: 27px; justify-content: center; border-bottom: 3px solid transparent; }
.view.on { border-bottom-color: #e6a96c; }
.view.dim { border-bottom-color: #eee; }
.find { flex: none; height: 23px; display: flex; align-items: center; gap: 8px; padding: 0 3px; }
.find input::placeholder { color: #999; }
.find.line { height: 24px; border-bottom: 1px solid #e4e4e4; }
.treehead { flex: none; height: 16px; background: #e0e0e0; padding-left: 2px; }
.tree { flex: 1; }
.tree li { height: 16px; display: flex; align-items: center; border-bottom: 1px solid #ececec; gap: 3px; white-space: nowrap; }
.tree .shade { background: #f5f5f5; }
.tree .sel { background: #999; color: #fff; }
.tree i { width: 7px; border-bottom: 1px dotted #999; margin: 0 -3px; }
.l0 { padding-left: 6px; }
.l0 i, .l1 i { flex: none; }
.l1 { padding-left: 25px; }
.l2 { padding-left: 51px; }
.tree .l2 i { width: 13px; height: 16px; border-left: 1px dotted #999; border-bottom: 0; background: linear-gradient(90deg, #aaa 50%, transparent 50%) 0 8px / 2px 1px repeat-x; }
.status { flex: none; height: 15px; line-height: 14px; padding-left: 2px; border-top: 1px solid #e0e0e0; }
.filterpane { width: 115px; border-right: 2px solid #ddd; display: flex; align-items: flex-start; gap: 4px; padding: 5px 0 0 7px; }

.content { flex: 1; min-width: 0; margin-right: 2px; display: flex; flex-direction: column; }
.icons { gap: 9px; padding-left: 8px; }
.icons svg { opacity: .85; }
.divider { width: 1px; height: 25px; background: #ccc; }
.views { flex: none; height: 33px; display: flex; align-items: center; gap: 8px; padding: 0 3px; }
.grid { flex: 1; min-height: 0; position: relative; overflow: hidden; }
table { width: 100%; border-collapse: separate; border-spacing: 0; table-layout: fixed; }
.c1 { width: 29px; } .c2 { width: 172px; } .c3 { width: 133px; } .c5 { width: 58px; } .c6 { width: 123px; }
th { height: 16px; padding: 0 2px; text-align: left; font-weight: normal; line-height: 16px; background: #e0e0e0; overflow: hidden; white-space: nowrap; }
th:first-child { padding-right: 0; }
td { height: 20px; padding: 0 6px; line-height: 19px; border-bottom: 1px solid #eee; border-right: 1px solid #e8e8e8; white-space: nowrap; overflow: hidden; }
td:first-child { padding: 0 5px; }
td svg, th svg { display: inline-block; vertical-align: top; margin: 1px 3px 0 0; }
td svg { opacity: .75; }
td:first-child svg { margin-right: 0; }
th .sort { float: right; margin: 5px 44px 0 0; }
th .more { float: right; margin: 5px 0 0; }
.vscroll { position: absolute; right: 0; top: 16px; bottom: 0; width: 16px; background: #ddd; border-top: 16px solid #f3f3f3; }
.vscroll svg { margin: -11px 0 0 4px; }
.hscroll { flex: none; height: 15px; margin-bottom: 1px; background: #dadada; border-left: 17px solid #f3f3f3; display: flex; align-items: center; }
.hscroll svg { margin-left: -12px; }
.foot { flex: none; height: 38px; padding: 7px 9px; }

.dialog, .menu { position: absolute; border: 2px solid #999; border-radius: 7px; background: #fff; box-shadow: 0 0 5px rgba(0, 0, 0, .35); overflow: hidden; color: #000; }
.dialog { left: 544px; top: 191px; width: 449px; height: 400px; display: flex; flex-direction: column; }
.dlg-head { flex: none; height: 25px; margin: 1px 1px 0; padding: 0 6px 0 2px; display: flex; align-items: center; gap: 8px; background: #808080; color: #d9d6cc; font-size: 15px; font-weight: bold; }
.dlg-head span { margin-left: -6px; }
.dlg-prop { margin: 0 5px; padding: 8px 4px 6px; border-bottom: 1px solid #ddd; }
.dlg-foot { margin-top: auto; display: flex; justify-content: flex-end; gap: 17px; padding: 0 10px 9px; }
.dlg-foot .bare { gap: 6px; }

.menu-main { left: 986px; top: 85px; width: 274px; height: 617px; display: flex; }
.menu-main .menu-list { flex: 1; margin: -13px 1px 0 0; }
.menu-sub { left: 1259px; top: 319px; width: 232px; padding-top: 1px; }
.it { height: 20px; display: flex; align-items: center; gap: 5px; padding: 0 3px 0 4px; border-radius: 4px; position: relative; }
.it svg { width: 15px; height: 10px; }
.it svg.cal { height: 14px; }
.it i { width: 15px; height: 10px; border: 1px solid #aaa; border-radius: 2px; background: #f4f4f4; color: #555; font: bold 6px/8px "Liberation Sans", sans-serif; text-align: center; }
.it.sub::after { content: ""; margin-left: auto; border-left: 5px solid #000; border-top: 4px solid transparent; border-bottom: 4px solid transparent; }
.it.active { background: #ec8b25; color: #fff; }
.sec { margin: 3px 3px 0; padding: 3px 0 1px 21px; border-top: 1px solid #777; font-weight: bold; color: #4a4a4a; white-space: nowrap; }
.sec.first { margin-top: 0; padding-top: 0; border-top: 0; }
.mscroll { width: 16px; background: #f0f0f0; display: flex; flex-direction: column; align-items: center; justify-content: space-between; padding: 6px 0; }
.mscroll span { width: 15px; height: 75px; margin: 93px 0 auto; background: #cdcdcd; }
```
